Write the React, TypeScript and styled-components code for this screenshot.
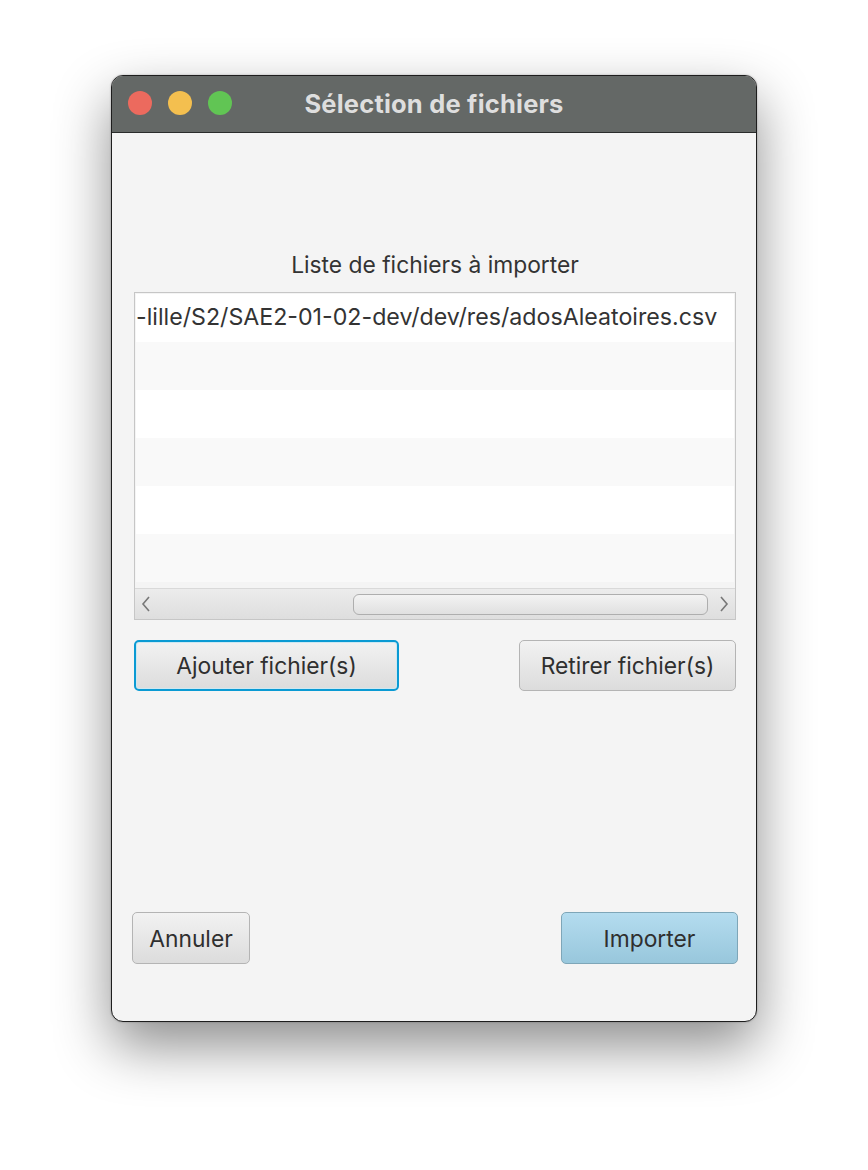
import React from "react";
import styled, { createGlobalStyle } from "styled-components";

const Global = createGlobalStyle`
  html, body { margin: 0; padding: 0; background: #ffffff; }
  body { font-family: "Inter", "Roboto", "Liberation Sans", sans-serif; }
`;

const Page = styled.div`
  width: 868px;
  height: 1170px;
  display: flex;
  justify-content: center;
  padding-top: 75px;
  box-sizing: border-box;
`;

const Window = styled.div`
  width: 646px;
  height: 947px;
  box-sizing: border-box;
  border: 1px solid #1e1e1e;
  border-radius: 12px;
  overflow: hidden;
  background: #f4f4f4;
  box-shadow: 0 24px 55px rgba(0, 0, 0, 0.45), 0 0 2px rgba(0, 0, 0, 0.3);
  display: flex;
  flex-direction: column;
`;

const TitleBar = styled.div`
  height: 57px;
  flex: 0 0 57px;
  box-sizing: border-box;
  background: #646866;
  border-bottom: 1px solid #2a2c2b;
  display: flex;
  align-items: center;
  position: relative;
`;

const Lights = styled.div`
  display: flex;
  gap: 16px;
  padding-left: 16px;
  position: absolute;
  left: 0;
  top: 15px;
`;

const Light = styled.span<{ $c: string }>`
  width: 24px;
  height: 24px;
  border-radius: 50%;
  background: ${(p) => p.$c};
`;

const Title = styled.div`
  flex: 1;
  text-align: center;
  color: #dedede;
  font-weight: 700;
  font-size: 25.5px;
  letter-spacing: 0.2px;
  margin-top: -2px;
`;

const Content = styled.div`
  flex: 1;
  display: flex;
  flex-direction: column;
  padding: 0 20px 0 22px;
`;

const Label = styled.div`
  margin-top: 119px;
  text-align: center;
  font-size: 22.8px;
  line-height: 26px;
  color: #333;
`;

const List = styled.div`
  margin-top: 14px;
  height: 328px;
  box-sizing: border-box;
  border: 1px solid #c6c6c6;
  background: #f4f4f4;
  display: flex;
  flex-direction: column;
  padding: 1px 1px 0 1px;
`;

const Rows = styled.div`
  flex: 1;
  overflow: hidden;
  display: flex;
  flex-direction: column;
`;

const Row = styled.div<{ $odd: boolean }>`
  height: 48px;
  flex: 0 0 48px;
  background: ${(p) => (p.$odd ? "#f9f9f9" : "#ffffff")};
  font-size: 23.2px;
  line-height: 48px;
  color: #333;
  white-space: nowrap;
  overflow: hidden;
  box-sizing: border-box;
`;

const RowText = styled.span`
  position: relative;
  top: -1px;
`;

const ScrollBar = styled.div`
  height: 31px;
  flex: 0 0 31px;
  box-sizing: border-box;
  border-top: 1px solid #d9d9d9;
  background: linear-gradient(#ececec, #dedede);
  display: flex;
  align-items: center;
  margin: 0 -1px;
`;

const Arrow = styled.div`
  width: 22px;
  height: 100%;
  display: flex;
  align-items: center;
  justify-content: center;
`;

const Track = styled.div`
  flex: 1;
  height: 100%;
  display: flex;
  align-items: center;
`;

const Thumb = styled.div`
  margin-left: 196px;
  width: 355px;
  height: 21px;
  box-sizing: border-box;
  border: 1px solid #aeaeae;
  border-radius: 6px;
  background: linear-gradient(#f3f3f3, #e0e0e0);
`;

const ButtonRow = styled.div<{ $top: number }>`
  margin-top: ${(p) => p.$top}px;
  display: flex;
  justify-content: space-between;
  align-items: center;
`;

const Button = styled.button<{ $w: number; $h: number; $variant?: "default" | "focus" }>`
  width: ${(p) => p.$w}px;
  height: ${(p) => p.$h}px;
  box-sizing: border-box;
  font-family: "Inter", "Roboto", "Liberation Sans", sans-serif;
  font-size: 22.8px;
  color: #2f2f2f;
  border-radius: 5px;
  padding: 0;
  ${(p) =>
    p.$variant === "default"
      ? `
    background: linear-gradient(#b4dcef, #98c7dc);
    border: 1px solid #7ea6b8;
  `
      : p.$variant === "focus"
      ? `
    background: linear-gradient(#f2f2f2, #dcdcdc);
    border: 2px solid #0a9ad3;
    box-shadow: inset 0 0 0 1px #cde8f2;
  `
      : `
    background: linear-gradient(#f2f2f2, #dcdcdc);
    border: 1px solid #b4b4b4;
  `}
`;

const BottomRow = styled(ButtonRow)`
  margin-left: -2px;
  margin-right: -2px;
`;

const ChevronLeft = () => (
  <svg width="12" height="18" viewBox="0 0 12 18">
    <path d="M9 2 L3 9 L9 16" fill="none" stroke="#777" strokeWidth="1.6" />
  </svg>
);
const ChevronRight = () => (
  <svg width="12" height="18" viewBox="0 0 12 18">
    <path d="M3 2 L9 9 L3 16" fill="none" stroke="#777" strokeWidth="1.6" />
  </svg>
);

export default function App() {
  const rows = [
    "-lille/S2/SAE2-01-02-dev/dev/res/adosAleatoires.csv",
    "",
    "",
    "",
    "",
    "",
  ];
  return (
    <>
      <Global />
      <Page>
        <Window>
          <TitleBar>
            <Lights>
              <Light $c="#ec6a5e" />
              <Light $c="#f4bf4f" />
              <Light $c="#61c554" />
            </Lights>
            <Title>Sélection de fichiers</Title>
          </TitleBar>
          <Content>
            <Label>Liste de fichiers à importer</Label>
            <List>
              <Rows>
                {rows.map((r, i) => (
                  <Row key={i} $odd={i % 2 === 1}>
                    <RowText>{r}</RowText>
                  </Row>
                ))}
              </Rows>
              <ScrollBar>
                <Arrow>
                  <ChevronLeft />
                </Arrow>
                <Track>
                  <Thumb />
                </Track>
                <Arrow>
                  <ChevronRight />
                </Arrow>
              </ScrollBar>
            </List>
            <ButtonRow $top={20}>
              <Button $w={265} $h={51} $variant="focus">Ajouter fichier(s)</Button>
              <Button $w={217} $h={51}>Retirer fichier(s)</Button>
            </ButtonRow>
            <BottomRow $top={221}>
              <Button $w={118} $h={52}>Annuler</Button>
              <Button $w={177} $h={52} $variant="default">Importer</Button>
            </BottomRow>
          </Content>
        </Window>
      </Page>
    </>
  );
}
